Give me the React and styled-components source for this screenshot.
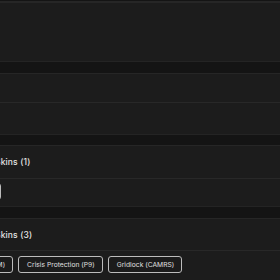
import React from 'react';
import styled, { createGlobalStyle } from 'styled-components';

const GlobalStyle = createGlobalStyle`
  html, body {
    margin: 0;
    padding: 0;
    background: #141414;
    overflow: hidden;
  }
  body {
    font-family: Inter, "Noto Sans", sans-serif;
    color: #e4e4e4;
  }
`;

const Page = styled.div`
  width: 280px;
  height: 280px;
  overflow: hidden;
  display: flex;
  flex-direction: column;
  gap: ${props => props.gap}px;
  padding-top: 1px;
  box-sizing: border-box;
`;

const Card = styled.section`
  flex-shrink: 0;
  background: #1c1c1c;
  border-top: ${props => props.topBorder || 1}px solid #262626;
  border-bottom: 1px solid #242424;
  display: flex;
  flex-direction: column;
  height: ${props => props.height}px;
  box-sizing: border-box;
  overflow: hidden;
`;

const Row = styled.div`
  flex-shrink: 0;
  height: ${props => props.height}px;
  display: flex;
  align-items: ${props => (props.padTop ? 'flex-start' : 'center')};
  padding-top: ${props => props.padTop || 0}px;
  box-sizing: border-box;
  & + & {
    border-top: 1px solid #282828;
  }
`;

const Heading = styled.h3`
  margin: 0 0 0 ${props => props.offset}px;
  font-size: 8.5px;
  font-weight: 500;
  letter-spacing: 0.15px;
  white-space: nowrap;
  color: #e6e6e6;
`;

const ChipRow = styled.div`
  display: flex;
  gap: 5px;
  margin-left: ${props => props.offset}px;
`;

const Chip = styled.button`
  flex-shrink: 0;
  height: 17px;
  padding: 0 7px 0 8px;
  border: 1px solid #bcbcbc;
  border-radius: 3px;
  background: #1b1b1b;
  color: #e0e0e0;
  font-family: inherit;
  font-size: 6.7px;
  letter-spacing: 0.02px;
  white-space: nowrap;
  box-sizing: border-box;
`;

export default function App() {
  return (
    <>
      <GlobalStyle />
      <Page gap={11}>
        <Card height={61} topBorder={2} />
        <Card height={62}>
          <Row height={28} />
          <Row height={31} />
        </Card>
        <Card height={62} style={{ marginTop: -1 }}>
          <Row height={32}>
            <Heading offset={-5}>Skins (1)</Heading>
          </Row>
          <Row height={29} padTop={4}>
            <ChipRow offset={-63}>
              <Chip>Asiimov (AWP)</Chip>
            </ChipRow>
          </Row>
        </Card>
        <Card height={70}>
          <Row height={31}>
            <Heading offset={-5}>Skins (3)</Heading>
          </Row>
          <Row height={34} padTop={5}>
            <ChipRow offset={-67}>
              <Chip>Dragon Lore (AWM)</Chip>
              <Chip>Crisis Protection (P9)</Chip>
              <Chip>Gridlock (CAMRS)</Chip>
            </ChipRow>
          </Row>
        </Card>
      </Page>
    </>
  );
}
